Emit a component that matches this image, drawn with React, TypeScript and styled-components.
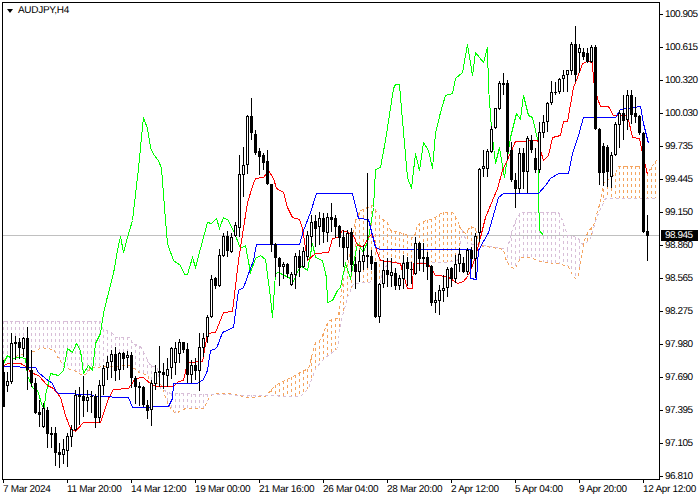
import React from "react";
import styled, { createGlobalStyle } from "styled-components";

type Candle = [number, number, number, number, number, number];
type Pt = [number, number];

// x, high, bodyTop, bodyBottom, low, bull(1) / bear(0)
const candles: Candle[] = [
  [3,360,372,407,407,0],[7,372,381,386,392,1],[11,333,343,382,384,1],[15,336,342,343,360,1],[19,338,342,348,359,0],[23,337,338,349,357,1],
  [27,327,338,370,390,0],[31,350,370,383,387,0],[35,378,383,413,414,0],[39,400,412,415,427,0],[43,403,408,427,428,1],[47,407,410,434,448,0],
  [51,427,433,434,448,1],[55,427,433,453,466,0],[59,443,452,455,468,0],[63,439,449,455,464,1],[67,433,436,451,467,1],[71,425,429,437,447,1],
  [75,390,395,430,431,1],[79,387,395,396,425,1],[83,376,396,401,417,0],[87,390,397,401,412,1],[91,391,396,397,413,0],[95,394,396,418,428,0],
  [99,380,385,418,423,1],[103,365,368,386,395,1],[107,356,362,368,380,1],[111,350,354,362,378,1],[115,347,354,371,381,0],[119,352,353,370,380,1],
  [123,352,353,359,370,0],[127,351,355,358,368,1],[131,352,355,378,388,0],[135,376,378,387,404,0],[139,382,386,388,406,0],[143,386,387,405,407,0],
  [147,400,405,411,419,0],[151,380,383,410,426,1],[155,365,372,384,390,1],[159,346,371,372,387,1],[163,363,372,375,389,0],[167,358,369,376,387,1],
  [171,347,348,368,379,1],[175,342,348,363,375,1],[179,339,342,354,363,1],[183,342,342,350,353,0],[187,343,349,375,383,0],[191,360,365,375,383,1],
  [195,358,365,371,380,0],[199,333,347,371,391,1],[203,333,338,348,357,1],[207,315,317,337,343,1],[211,275,279,317,318,1],[215,277,278,286,289,0],
  [219,249,255,286,287,1],[223,233,236,256,257,1],[227,231,236,251,257,0],[231,233,237,252,253,1],[235,222,225,236,237,1],[239,155,174,228,237,1],
  [243,147,165,175,197,1],[247,115,116,165,174,1],[251,98,116,133,140,0],[255,130,134,153,155,0],[259,148,151,157,175,0],[263,153,155,163,170,0],
  [267,150,161,184,185,0],[271,184,184,245,252,0],[275,243,244,258,277,0],[279,257,258,267,286,0],[283,262,264,267,279,1],[287,263,264,274,278,0],
  [291,272,274,285,286,1],[295,253,256,275,289,1],[299,250,256,268,277,0],[303,247,251,267,268,1],[307,231,235,257,260,1],[311,215,222,237,247,1],
  [315,215,221,229,247,0],[319,212,218,227,245,1],[323,213,218,232,243,0],[327,213,217,233,242,1],[331,203,217,220,232,0],[335,215,218,227,238,0],
  [339,225,226,238,247,0],[343,230,237,248,267,0],[347,230,233,248,260,1],[351,228,232,265,272,0],[355,257,264,272,289,0],[359,250,261,272,282,1],
  [363,245,255,262,270,1],[367,173,255,257,268,0],[371,250,256,264,270,0],[375,262,262,317,318,0],[379,283,284,317,323,1],[383,260,270,284,288,1],
  [387,258,270,275,287,0],[391,258,272,276,287,1],[395,268,273,286,290,0],[399,275,278,286,290,1],[403,255,263,279,289,1],[407,257,262,269,286,0],
  [411,262,269,270,284,0],[415,237,243,274,275,1],[419,242,243,259,271,0],[423,243,257,259,272,0],[427,252,257,267,280,0],[431,265,266,303,306,0],
  [435,292,300,303,313,1],[439,285,290,301,315,1],[443,275,288,291,302,1],[447,267,269,288,297,1],[451,267,268,279,287,0],[455,255,264,279,283,1],
  [459,248,254,264,272,1],[463,257,263,272,273,0],[467,248,250,272,275,1],[471,247,250,259,268,0],[475,233,236,259,278,1],[479,168,169,233,242,1],
  [483,150,166,169,177,1],[487,149,151,169,177,1],[491,126,129,152,153,1],[495,108,108,128,129,1],[499,81,83,109,110,1],[503,73,83,84,95,1],
  [507,80,83,152,160,0],[511,142,150,180,182,0],[515,173,180,189,208,0],[519,148,153,189,193,1],[523,148,153,172,189,0],[527,136,138,172,193,1],
  [531,135,140,150,153,0],[535,148,158,170,173,0],[539,122,132,170,173,1],[543,115,122,133,138,1],[547,102,103,122,132,1],[551,81,92,103,105,1],
  [555,82,92,93,95,0],[559,78,79,92,94,1],[563,70,75,79,92,1],[567,70,70,75,92,1],[571,42,44,71,75,1],[575,26,44,75,82,0],
  [579,44,48,53,73,1],[583,48,52,57,60,0],[587,48,53,62,63,0],[591,45,47,62,63,1],[595,45,47,129,130,0],[599,128,129,173,185,0],
  [603,143,146,173,186,0],[607,145,147,172,187,0],[611,152,155,177,188,1],[615,122,124,155,156,1],[619,110,113,125,148,1],[623,95,113,121,140,0],
  [627,90,95,120,130,1],[631,90,95,115,124,0],[635,97,113,117,123,0],[639,115,116,133,135,0],[643,132,133,232,233,0],[647,215,231,236,261,0],
];

const kijun: Pt[] = [[3,366],[35,367],[38,372],[45,378],[52,383],[55,390],[58,393],[90,394],[95,396],[128,397],[132,407],[168,406],[172,398],[173,383],[197,383],[203,379],[207,370],[210,350],[216,348],[222,332],[233,327],[238,290],[243,287],[253,260],[256,244],[299,244],[303,230],[310,212],[316,193],[352,193],[358,218],[368,219],[375,247],[380,249],[470,249],[470,278],[476,279],[478,250],[488,232],[498,197],[503,193],[538,193],[545,185],[550,178],[558,173],[568,173],[572,153],[578,135],[583,117],[615,117],[620,109],[640,106],[643,123],[648,143]];
const tenkan: Pt[] = [[3,365],[8,363],[20,363],[27,367],[30,372],[38,375],[47,385],[53,388],[60,397],[65,415],[70,428],[75,431],[83,422],[100,422],[108,398],[113,389],[128,388],[135,378],[143,377],[152,385],[157,386],[173,386],[178,381],[183,380],[187,362],[202,361],[207,333],[215,332],[223,312],[232,311],[238,260],[247,202],[253,183],[255,178],[263,177],[268,170],[273,178],[276,188],[283,192],[287,207],[292,217],[299,219],[302,228],[307,260],[315,253],[328,252],[332,238],[337,237],[342,230],[348,232],[353,235],[357,245],[363,246],[368,237],[372,233],[376,250],[380,260],[400,263],[403,275],[407,288],[412,288],[413,263],[427,263],[430,267],[435,275],[447,276],[457,283],[463,281],[468,275],[475,257],[480,237],[485,217],[497,188],[502,170],[508,157],[515,141],[537,140],[543,160],[548,155],[552,137],[560,135],[563,121],[567,121],[573,87],[577,77],[582,63],[587,61],[592,62],[593,80],[597,98],[600,106],[608,106],[613,115],[627,115],[632,137],[639,138],[642,153],[647,174]];
const chikou: Pt[] = [[3,363],[7,355],[12,359],[15,357],[20,357],[25,358],[27,375],[32,387],[37,390],[42,406],[44,407],[45,395],[50,373],[58,375],[63,370],[67,348],[72,352],[76,343],[80,350],[83,373],[88,365],[92,370],[95,343],[100,333],[103,313],[106,300],[110,285],[113,273],[117,250],[120,236],[123,252],[127,237],[132,220],[138,168],[140,147],[143,117],[147,128],[150,147],[153,154],[158,160],[161,168],[165,220],[167,243],[173,260],[180,265],[184,274],[187,274],[192,257],[195,267],[200,248],[207,222],[211,223],[216,218],[219,228],[223,217],[228,220],[235,235],[240,248],[245,245],[250,272],[255,258],[260,255],[265,259],[270,297],[272,317],[275,273],[278,272],[290,278],[292,283],[300,265],[307,270],[312,243],[315,257],[322,260],[326,277],[327,302],[332,300],[337,290],[340,287],[345,263],[350,278],[357,243],[363,252],[368,238],[373,207],[375,169],[380,167],[385,140],[393,88],[395,84],[399,84],[402,120],[404,143],[407,177],[411,188],[415,153],[419,170],[423,142],[428,150],[432,168],[435,133],[440,112],[445,95],[452,93],[455,78],[462,72],[467,44],[472,75],[475,52],[483,62],[487,47],[488,87],[491,128],[495,163],[499,147],[504,177],[510,137],[516,113],[520,119],[523,95],[528,115],[532,117],[538,143],[538,193],[539,230],[543,235]];
const spanA: Pt[] = [[3,360],[7,358],[37,350],[40,347],[53,349],[58,358],[65,368],[72,369],[82,375],[87,373],[90,367],[130,365],[140,373],[147,374],[150,383],[160,383],[168,405],[175,413],[185,408],[203,408],[210,395],[215,393],[233,393],[245,397],[265,396],[275,385],[300,372],[308,368],[315,342],[320,340],[328,320],[337,318],[340,300],[343,272],[348,262],[355,220],[360,210],[372,205],[380,217],[387,222],[390,230],[403,233],[408,235],[413,238],[417,225],[420,222],[433,218],[442,212],[452,212],[457,220],[460,228],[465,233],[470,226],[475,228],[479,245],[503,249],[505,258],[510,267],[515,268],[520,257],[530,257],[537,260],[543,262],[557,263],[568,266],[572,275],[575,278],[578,275],[583,243],[587,232],[593,225],[600,200],[603,183],[615,173],[618,166],[643,166],[647,173],[652,165],[656,160]];
const spanB: Pt[] = [[3,321],[100,321],[102,328],[112,333],[115,337],[130,337],[132,343],[140,346],[150,365],[157,367],[160,388],[170,393],[210,394],[300,396],[308,388],[315,368],[325,357],[337,348],[340,323],[347,297],[353,283],[368,282],[373,280],[380,282],[383,268],[390,262],[445,262],[457,260],[462,231],[467,243],[483,245],[507,249],[510,235],[516,218],[520,212],[558,212],[562,220],[567,235],[577,237],[583,245],[590,238],[597,215],[605,198],[656,198]];

const at = (line: Pt[], x: number): number => {
  for (let i = 1; i < line.length; i++) {
    const [x0, y0] = line[i - 1];
    const [x1, y1] = line[i];
    if (x <= x1 && x1 > x0) return y0 + ((y1 - y0) * (x - x0)) / (x1 - x0);
  }
  return line[line.length - 1][1];
};
const pts = (line: Pt[]) => line.map(([x, y]) => `${x + 0.5},${y + 0.5}`).join(" ");

const hatchColumns = Array.from({ length: 164 }, (_, k) => 3 + 4 * k).map((x) => {
  const a = at(spanA, x);
  const b = at(spanB, x);
  return { x, top: Math.round(Math.min(a, b)), bottom: Math.round(Math.max(a, b)), aTop: a < b };
});

const prices = ["100.905","100.615","100.320","100.030","99.735","99.445","99.150","98.860","98.565","98.275","97.980","97.690","97.395","97.105","96.810"];
const times = ["7 Mar 2024","11 Mar 20:00","14 Mar 12:00","19 Mar 00:00","21 Mar 16:00","26 Mar 04:00","28 Mar 20:00","2 Apr 12:00","5 Apr 04:00","9 Apr 20:00","12 Apr 12:00"];

const Global = createGlobalStyle`
  html, body { margin: 0; padding: 0; background: #fff; }
`;

const Terminal = styled.div`
  width: 700px;
  height: 500px;
  box-sizing: border-box;
  padding: 2px 0 0 2px;
  display: grid;
  grid-template-columns: 658px 40px;
  grid-template-rows: 478px 20px;
  overflow: hidden;
  background: #fff;
  color: #000;
  font-family: "Liberation Sans", Arial, sans-serif;
  font-size: 10px;
  text-rendering: geometricPrecision;
`;

const ChartPane = styled.div`
  position: relative;
  box-sizing: border-box;
  border: 1px solid #000;
`;

const ChartSvg = styled.svg`
  display: block;
  width: 656px;
  height: 476px;
`;

const Legend = styled.div`
  position: absolute;
  left: 4px;
  top: 1px;
  display: flex;
  align-items: center;
  gap: 5px;
  height: 14px;
  line-height: 14px;
  letter-spacing: -0.3px;
`;

const LegendArrow = styled.span`
  width: 0;
  height: 0;
  border-left: 3.5px solid transparent;
  border-right: 3.5px solid transparent;
  border-top: 4px solid #000;
`;

const PriceAxis = styled.div`
  position: relative;
  margin-top: -4px;
  display: flex;
  flex-direction: column;
  letter-spacing: -0.5px;
`;

const PriceRow = styled.div`
  flex: 0 0 33px;
  display: flex;
  align-items: center;
  gap: 2px;
`;

const PriceLabel = styled.span`
  line-height: 8px;
`;

const Tick = styled.span`
  width: 3px;
  height: 1px;
  background: #000;
`;

const CurrentPrice = styled.div`
  position: absolute;
  left: 1px;
  top: 232px;
  width: 37px;
  height: 11px;
  line-height: 11px;
  padding-left: 4px;
  box-sizing: border-box;
  background: #000;
  color: #fff;
`;

const TimeAxis = styled.div`
  grid-column: 1 / span 2;
  display: flex;
  padding-left: 1px;
  white-space: nowrap;
  letter-spacing: -0.3px;
`;

const TimeCell = styled.div`
  flex: 0 0 64px;
  position: relative;
  padding-top: 4px;
  line-height: 12px;
  &::before {
    content: "";
    position: absolute;
    left: 0;
    top: 0;
    width: 1px;
    height: 3px;
    background: #000;
  }
`;

const PriceLine = styled.line`
  stroke: #c0c0c0;
  stroke-width: 1;
`;

const Series = styled.polyline<{ $color: string; $dotted?: boolean }>`
  fill: none;
  stroke: ${(p) => p.$color};
  stroke-width: 1;
  stroke-dasharray: ${(p) => (p.$dotted ? "3 3" : "none")};
`;

const HatchLine = styled.line<{ $aTop: boolean }>`
  stroke: ${(p) => (p.$aTop ? "#f4a460" : "#d8bfd8")};
  stroke-width: 1;
  stroke-dasharray: 3 3;
`;

const Wick = styled.rect`
  fill: #000;
`;

const Body = styled.rect<{ $bull: boolean }>`
  fill: ${(p) => (p.$bull ? "#fff" : "#000")};
  stroke: ${(p) => (p.$bull ? "#000" : "none")};
  stroke-width: 1;
`;

export default function App() {
  return (
    <Terminal>
      <Global />
      <ChartPane>
        <ChartSvg viewBox="3 3 656 476" shapeRendering="crispEdges">
          <PriceLine x1={3} x2={659} y1={235.5} y2={235.5} />
          {hatchColumns
            .filter((c) => c.bottom - c.top > 1)
            .map((c) => (
              <HatchLine key={c.x} $aTop={c.aTop} x1={c.x + 0.5} x2={c.x + 0.5} y1={c.top} y2={c.bottom} />
            ))}
          <Series $color="#f4a460" $dotted points={pts(spanA)} />
          <Series $color="#d8bfd8" $dotted points={pts(spanB)} />
          <Series $color="#00ff00" points={pts(chikou)} />
          <Series $color="#ff0000" points={pts(tenkan)} />
          <Series $color="#0000ff" points={pts(kijun)} />
          {candles.map(([x, h, t, b, l, bull]) => (
            <g key={x}>
              <Wick x={x} y={h} width={1} height={l - h} />
              {bull ? (
                <Body $bull x={x - 0.5} y={t + 0.5} width={2} height={Math.max(b - t - 1, 1)} />
              ) : (
                <Body $bull={false} x={x - 1} y={t} width={3} height={Math.max(b - t, 1)} />
              )}
            </g>
          ))}
        </ChartSvg>
        <Legend>
          <LegendArrow />
          <span>AUDJPY,H4</span>
        </Legend>
      </ChartPane>
      <PriceAxis>
        {prices.map((p) => (
          <PriceRow key={p}>
            <Tick />
            <PriceLabel>{p}</PriceLabel>
          </PriceRow>
        ))}
        <CurrentPrice>98.945</CurrentPrice>
      </PriceAxis>
      <TimeAxis>
        {times.map((t) => (
          <TimeCell key={t}>{t}</TimeCell>
        ))}
      </TimeAxis>
    </Terminal>
  );
}
